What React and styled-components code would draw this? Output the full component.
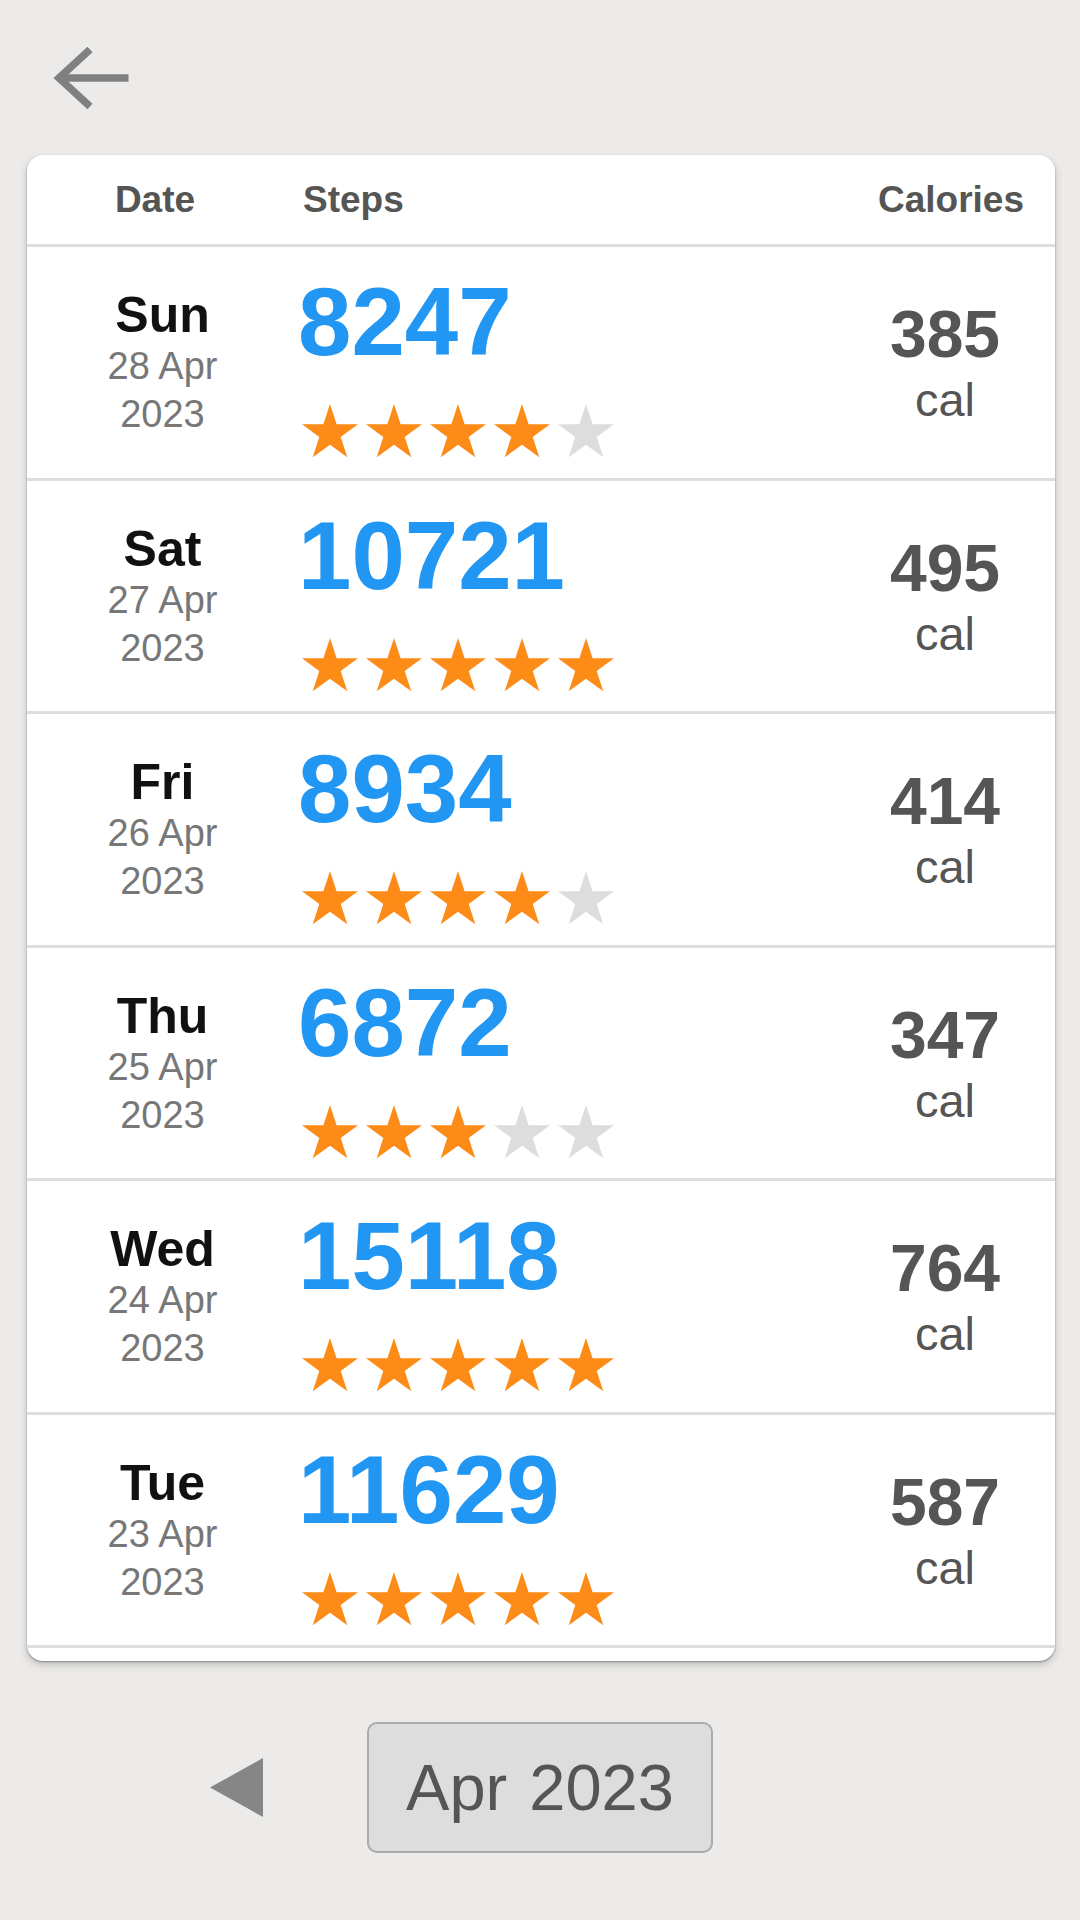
import React from "react";
import styled, { createGlobalStyle } from "styled-components";

const GlobalStyle = createGlobalStyle`
  html, body {
    margin: 0;
    padding: 0;
    background: #ecebe9;
    font-family: "Liberation Sans", Arial, sans-serif;
  }
  * { box-sizing: border-box; }
`;

const Page = styled.div`
  width: 1080px;
  min-height: 1920px;
  display: flex;
  flex-direction: column;
`;

const TopBar = styled.div`
  height: 155px;
  display: flex;
  align-items: center;
  padding-left: 50px;
`;

const BackButton = styled.button`
  width: 80px;
  height: 72px;
  padding: 0;
  border: none;
  background: transparent;
  display: block;
  cursor: pointer;
  svg { display: block; }
`;

const Card = styled.div`
  margin: 0 25px 0 27px;
  background: #ffffff;
  border-radius: 16px;
  overflow: hidden;
  box-shadow: 0 1px 2px rgba(0, 0, 0, 0.35), 0 4px 9px rgba(0, 0, 0, 0.18);
`;

const Grid = styled.div`
  display: grid;
  grid-template-columns: 271px 1fr 220px;
  border-bottom: 3px solid #dedede;
`;

const HeaderRow = styled(Grid)`
  height: 92px;
  font-size: 37px;
  font-weight: 700;
  color: #555555;
  line-height: 89px;
`;

const HeadCell = styled.div`
  text-align: ${(p) => p.$align || "left"};
  padding-left: ${(p) => p.$pl || 0}px;
  padding-right: ${(p) => p.$pr || 0}px;
`;

const List = styled.div`
  padding-bottom: 13px;
`;

const Row = styled(Grid)`
  height: 233.5px;
`;

const DateCell = styled.div`
  display: flex;
  flex-direction: column;
  align-items: center;
  padding-top: 41px;
`;

const Day = styled.div`
  font-size: 50px;
  font-weight: 700;
  line-height: 54px;
  color: #111111;
`;

const DateLine = styled.div`
  font-size: 38px;
  line-height: 48px;
  color: #777777;
`;

const StepsCell = styled.div`
  display: flex;
  flex-direction: column;
  align-items: flex-start;
  padding-top: 27px;
`;

const Steps = styled.div`
  font-size: 96px;
  font-weight: 700;
  line-height: 96px;
  color: #2196f3;
`;

const Stars = styled.div`
  display: flex;
  gap: 8px;
  margin-top: 34px;
  margin-left: 4px;
  svg { display: block; }
`;

const CalCell = styled.div`
  display: flex;
  flex-direction: column;
  align-items: center;
  padding-top: 51px;
  color: #555555;
`;

const CalValue = styled.div`
  font-size: 66px;
  font-weight: 700;
  line-height: 72px;
`;

const CalUnit = styled.div`
  font-size: 47px;
  line-height: 60px;
`;

const Pager = styled.div`
  display: flex;
  justify-content: center;
  align-items: center;
  gap: 104px;
  margin-top: 61px;
`;

const Arrow = styled.button`
  width: 53px;
  height: 59px;
  padding: 0;
  border: none;
  background: transparent;
  cursor: pointer;
  visibility: ${(p) => (p.$hidden ? "hidden" : "visible")};
  svg { display: block; }
`;

const MonthButton = styled.button`
  width: 346px;
  height: 131px;
  border: 2px solid #aaaaaa;
  border-radius: 10px;
  background: #dddddd;
  color: #555555;
  font-family: "Liberation Sans", Arial, sans-serif;
  font-size: 65px;
  line-height: 127px;
  word-spacing: 4px;
  padding: 0;
  cursor: pointer;
`;

const R = 29.44;
const starPoints = (() => {
  const cx = 28;
  const cy = R;
  const pts = [];
  for (let i = 0; i < 10; i++) {
    const r = i % 2 === 0 ? R : R * 0.382;
    const a = (-90 + i * 36) * (Math.PI / 180);
    pts.push(`${(cx + r * Math.cos(a)).toFixed(2)},${(cy + r * Math.sin(a)).toFixed(2)}`);
  }
  return pts.join(" ");
})();

const Star = ({ on }) => (
  <svg width="56" height="54" viewBox="0 0 56 54">
    <polygon points={starPoints} fill={on ? "#fd8b17" : "#dddddd"} />
  </svg>
);

const rows = [
  { day: "Sun", date: "28 Apr", year: "2023", steps: 8247, stars: 4, cal: 385 },
  { day: "Sat", date: "27 Apr", year: "2023", steps: 10721, stars: 5, cal: 495 },
  { day: "Fri", date: "26 Apr", year: "2023", steps: 8934, stars: 4, cal: 414 },
  { day: "Thu", date: "25 Apr", year: "2023", steps: 6872, stars: 3, cal: 347 },
  { day: "Wed", date: "24 Apr", year: "2023", steps: 15118, stars: 5, cal: 764 },
  { day: "Tue", date: "23 Apr", year: "2023", steps: 11629, stars: 5, cal: 587 },
];

const Triangle = ({ dir }) => (
  <svg width="53" height="59" viewBox="0 0 53 59">
    {dir === "left" ? (
      <polygon points="0,29.5 53,0 53,59" fill="#868686" />
    ) : (
      <polygon points="53,29.5 0,0 0,59" fill="#868686" />
    )}
  </svg>
);

export default function App() {
  return (
    <Page>
      <GlobalStyle />
      <TopBar>
        <BackButton aria-label="Back">
          <svg width="80" height="72" viewBox="0 0 80 72">
            <path d="M10 36 H78.5" stroke="#808080" strokeWidth="7.5" fill="none" />
            <path
              d="M40 7.5 L9 36 L40 64.5"
              stroke="#808080"
              strokeWidth="7.5"
              fill="none"
              strokeLinejoin="miter"
            />
          </svg>
        </BackButton>
      </TopBar>

      <Card>
        <HeaderRow>
          <HeadCell $align="center" $pr={15}>Date</HeadCell>
          <HeadCell $pl={5}>Steps</HeadCell>
          <HeadCell $align="right" $pr={31}>Calories</HeadCell>
        </HeaderRow>
        <List>
          {rows.map((r) => (
            <Row key={r.date}>
              <DateCell>
                <Day>{r.day}</Day>
                <DateLine>{r.date}</DateLine>
                <DateLine>{r.year}</DateLine>
              </DateCell>
              <StepsCell>
                <Steps>{r.steps}</Steps>
                <Stars>
                  {[0, 1, 2, 3, 4].map((i) => (
                    <Star key={i} on={i < r.stars} />
                  ))}
                </Stars>
              </StepsCell>
              <CalCell>
                <CalValue>{r.cal}</CalValue>
                <CalUnit>cal</CalUnit>
              </CalCell>
            </Row>
          ))}
        </List>
      </Card>

      <Pager>
        <Arrow aria-label="Previous month">
          <Triangle dir="left" />
        </Arrow>
        <MonthButton>Apr 2023</MonthButton>
        <Arrow $hidden aria-label="Next month">
          <Triangle dir="right" />
        </Arrow>
      </Pager>
    </Page>
  );
}
